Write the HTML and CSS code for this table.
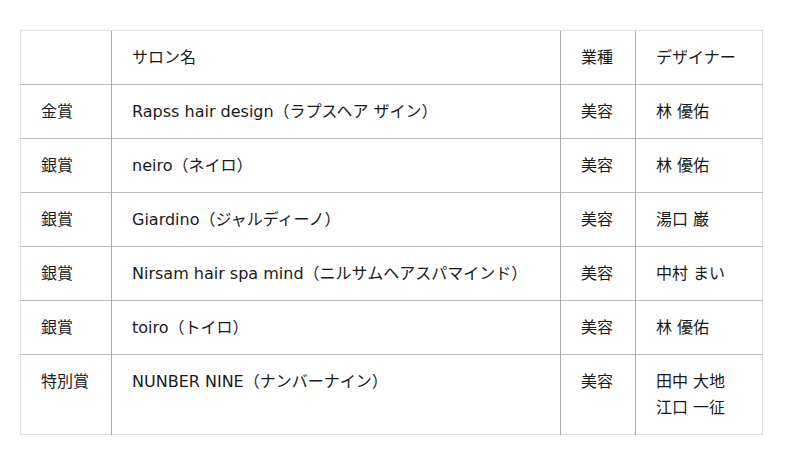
FILE: index.html
```html
<!DOCTYPE html>
<html lang="ja">
<head>
<meta charset="utf-8">
<link rel="stylesheet" href="styles.css">
</head>
<body>
<table class="awards">
  <colgroup>
    <col class="c-award"><col class="c-salon"><col class="c-type"><col class="c-designer">
  </colgroup>
  <tr><td></td><td>サロン名</td><td>業種</td><td>デザイナー</td></tr>
  <tr><td>金賞</td><td>Rapss hair design（ラプスヘア ザイン）</td><td>美容</td><td>林 優佑</td></tr>
  <tr><td>銀賞</td><td>neiro（ネイロ）</td><td>美容</td><td>林 優佑</td></tr>
  <tr><td>銀賞</td><td>Giardino（ジャルディーノ）</td><td>美容</td><td>湯口 巌</td></tr>
  <tr><td>銀賞</td><td>Nirsam hair spa mind（ニルサムヘアスパマインド）</td><td>美容</td><td>中村 まい</td></tr>
  <tr><td>銀賞</td><td>toiro（トイロ）</td><td>美容</td><td>林 優佑</td></tr>
  <tr><td>特別賞</td><td>NUNBER NINE（ナンバーナイン）</td><td>美容</td><td>田中 大地<br>江口 一征</td></tr>
</table>
</body>
</html>
```
FILE: styles.css
```css
html, body { margin: 0; padding: 0; background: #fff; }
body {
  padding: 30px 20px;
  font-family: "DejaVu Sans", "Noto Sans CJK JP", sans-serif;
  font-size: 16px;
  color: #1a1a1a;
}
.awards {
  border-collapse: collapse;
  width: 742px;
  table-layout: fixed;
  border: 1px solid #ddd;
}
.c-award { width: 91px; }
.c-salon { width: 449px; }
.c-type { width: 75px; }
.c-designer { width: 127px; }
.awards td {
  padding: 14px 20px 13px;
  line-height: 26px;
  vertical-align: top;
  border-top: 1px solid #bbb;
  border-left: 1px solid #aaa;
  text-align: left;
}
.awards tr:first-child td { border-top-color: #ddd; }
.awards td:first-child { border-left-color: #ddd; }
```
